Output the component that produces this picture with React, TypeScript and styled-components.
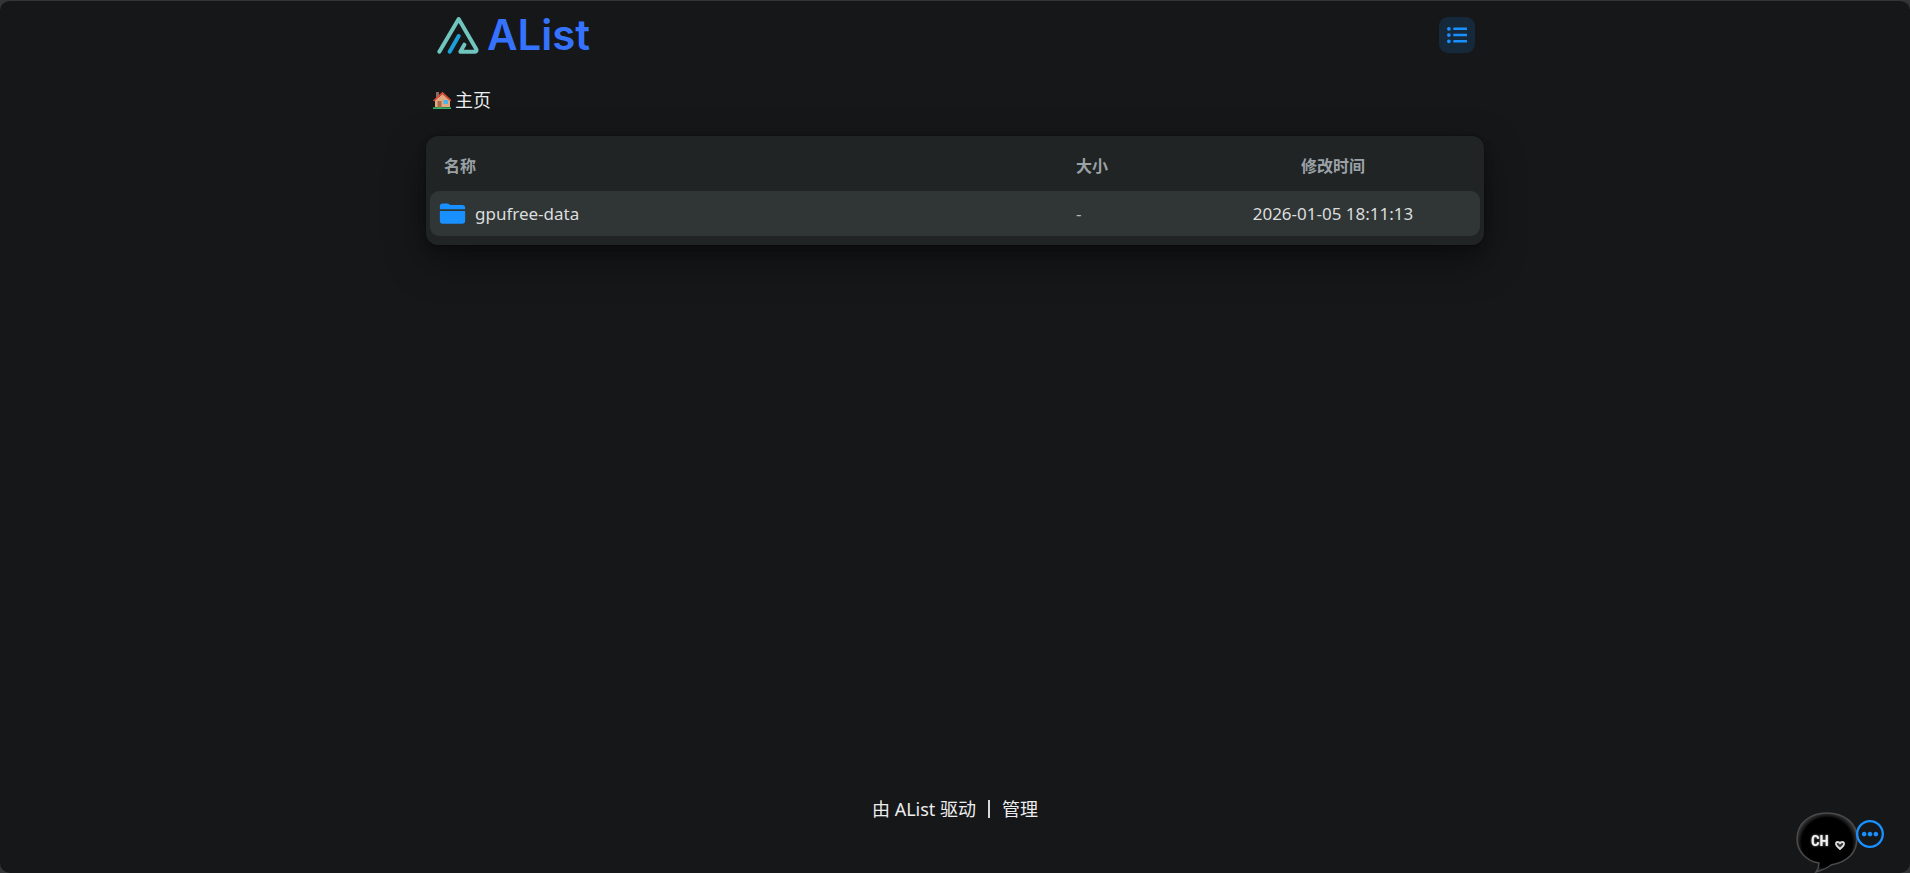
import React from "react";
import styled, { createGlobalStyle } from "styled-components";
import { FaListUl } from "react-icons/fa";
import { IoFolder } from "react-icons/io5";
import { CgMoreO } from "react-icons/cg";

const GlobalStyle = createGlobalStyle`
  *, *::before, *::after { box-sizing: border-box; }
  html { background: #333536; }
  body {
    margin: 0;
    color: #ecedee;
    font-family: "Noto Sans", "Noto Sans CJK SC", sans-serif;
    font-size: 18px;
    line-height: 24px;
  }
  a { color: inherit; text-decoration: none; }
`;

const Page = styled.div`
  min-height: 100vh;
  display: flex;
  flex-direction: column;
  align-items: center;
  background: #161719;
  border-top: 1px solid #333536;
  border-radius: 10px;
`;

const Container = styled.div`
  width: 100%;
  max-width: 1058px;
`;

const Header = styled.header`
  display: flex;
  align-items: center;
  justify-content: space-between;
  height: 68px;
  padding: 0 9px 0 11px;
`;

const Brand = styled.a`
  display: flex;
  align-items: center;
  gap: 8px;
`;

const BrandName = styled.span`
  color: #3573ff;
  font-family: Inter, sans-serif;
  font-size: 42px;
  font-weight: 600;
  line-height: 48px;
`;

const LayoutButton = styled.button`
  display: grid;
  place-items: center;
  width: 36px;
  height: 36px;
  padding: 0;
  border: 0;
  border-radius: 9px;
  background: #16293b;
  color: #1890ff;
  font-size: 20px;
`;

const Nav = styled.nav`
  display: flex;
  padding: 19px 7px 24px;
`;

const Crumb = styled.a`
  display: flex;
  align-items: center;
  gap: 4px;
`;

const Card = styled.main`
  padding: 4px 4px 9px;
  border-radius: 12px;
  background: #202425;
  box-shadow: 0 0 0 1px rgba(0, 0, 0, 0.1), 0 5px 10px rgba(0, 0, 0, 0.2),
    0 15px 40px rgba(0, 0, 0, 0.4);
`;

const Files = styled.table`
  width: 100%;
  table-layout: fixed;
  border-spacing: 0;
`;

const Head = styled.th<{ $width?: string; $center?: boolean }>`
  width: ${(p) => p.$width ?? "auto"};
  height: 51px;
  padding: 0 14px;
  color: #9ba1a6;
  font-size: 16px;
  font-weight: 700;
  text-align: ${(p) => (p.$center ? "center" : "left")};
`;

const Cell = styled.td<{ $center?: boolean }>`
  height: 45px;
  padding: 0 14px;
  background: #303536;
  color: #dcdddd;
  font-size: 17px;
  text-align: ${(p) => (p.$center ? "center" : "left")};
  &:first-child { padding-left: 9px; border-radius: 9px 0 0 9px; }
  &:nth-child(2) { color: #b4b7b8; }
  &:last-child { border-radius: 0 9px 9px 0; }
`;

const FileLink = styled.a`
  display: flex;
  align-items: center;
  gap: 9px;
  svg { color: #1890ff; font-size: 27px; }
`;

const Footer = styled.footer`
  display: flex;
  align-items: center;
  gap: 12px;
  margin-top: auto;
  padding-bottom: 52px;
`;

const Divider = styled.span`
  width: 2px;
  height: 18px;
  background: #d8d8d8;
`;

const Corner = styled.div`
  position: fixed;
  right: 26px;
  bottom: 0;
  display: flex;
  align-items: flex-start;
`;

const MoreButton = styled.button`
  display: grid;
  margin: 11px 0 0 -3px;
  padding: 0;
  border: 0;
  background: none;
  color: #1890ff;
  font-size: 28px;
`;

const Logo = () => (
  <svg width="42" height="38" viewBox="50 48 126 114" fill="none" strokeLinecap="round" strokeLinejoin="round" strokeWidth="12" aria-hidden="true">
    <path d="M57 155 115 57 168 148Q170 155 164 155H120L132 134" stroke="#70c6be" />
    <path d="M88 155 115 108" stroke="#1ba0d8" />
  </svg>
);

const House = () => (
  <svg width="18" height="18" viewBox="0 0 18 18" aria-hidden="true">
    <path d="M3 1h3v8H3z" fill="#8c6b5c" />
    <path d="M2 9.500 9.500 3 17 9.500V16H2z" fill="#e3a97e" />
    <path d="M1 9.500 9.500 1.800 17.500 9.500" fill="none" stroke="#dd4b39" strokeWidth="1.600" strokeLinecap="round" />
    <path d="M4.500 10h4v7h-4z" fill="#a9674c" />
    <path d="M10.500 9h4.500v4h-4.500z" fill="#49b4ea" />
    <path d="M0 16.300h18V18H0z" fill="#36b268" />
  </svg>
);

const Bubble = () => (
  <svg width="64" height="64" viewBox="0 0 64 64" role="img" aria-label="CH">
    <defs>
      <filter id="glow" x="-50%" y="-50%" width="200%" height="200%">
        <feDropShadow dx="0" dy="0" stdDeviation="1.200" floodColor="#fff" floodOpacity=".6" />
      </filter>
      <radialGradient id="ink">
        <stop offset=".84" stopColor="#000" />
        <stop offset="1" stopColor="#303030" />
      </radialGradient>
    </defs>
    <path d="M24 54Q24 59 21 63Q31 60 36 56Q62 51 62 29C62 14 49 4 32 4S2 14 2 30C2 42 11 52 24 54Z" fill="url(#ink)" stroke="#4a4a4a" strokeWidth="1.500" />
    <g filter="url(#glow)" fill="#f2f2f2">
      <text x="16" y="37" fontFamily="'Roboto Condensed', Roboto, sans-serif" fontWeight="700" fontSize="15">CH</text>
    </g>
    <path d="M45 40 41.500 36.500Q40 33 42.500 33Q44.500 33 45 34.500Q45.500 33 47.500 33Q50 33 48.500 36.500Z" fill="#333" stroke="#ddd" strokeWidth="1.800" strokeLinejoin="round" />
  </svg>
);

const files = [{ name: "gpufree-data", size: "-", modified: "2026-01-05 18:11:13" }];

export default function App() {
  return (
    <Page>
      <GlobalStyle />
      <Container>
        <Header>
          <Brand href="#">
            <Logo />
            <BrandName>AList</BrandName>
          </Brand>
          <LayoutButton aria-label="布局"><FaListUl /></LayoutButton>
        </Header>
        <Nav>
          <Crumb href="#"><House />主页</Crumb>
        </Nav>
        <Card>
          <Files>
            <colgroup>
              <col />
              <col width="124" />
              <col width="294" />
            </colgroup>
            <thead>
              <tr>
                <Head scope="col">名称</Head>
                <Head scope="col" $width="123px">大小</Head>
                <Head scope="col" $width="294px" $center>修改时间</Head>
              </tr>
            </thead>
            <tbody>
              {files.map((f) => (
                <tr key={f.name}>
                  <Cell><FileLink href="#"><IoFolder />{f.name}</FileLink></Cell>
                  <Cell>{f.size}</Cell>
                  <Cell $center>{f.modified}</Cell>
                </tr>
              ))}
            </tbody>
          </Files>
        </Card>
      </Container>
      <Footer>
        <a href="#">由 AList 驱动</a>
        <Divider />
        <a href="#">管理</a>
      </Footer>
      <Corner>
        <Bubble />
        <MoreButton aria-label="更多"><CgMoreO /></MoreButton>
      </Corner>
    </Page>
  );
}
